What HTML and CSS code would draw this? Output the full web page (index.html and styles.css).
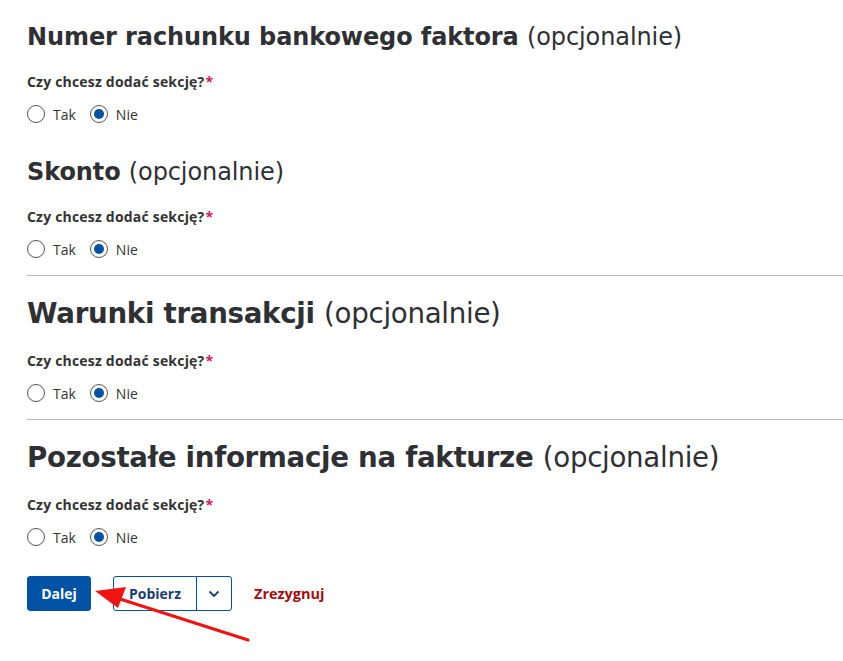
FILE: index.html
```html
<!DOCTYPE html>
<html lang="pl">
<head>
<meta charset="utf-8">
<title>Formularz</title>
<link rel="stylesheet" href="styles.css">
</head>
<body>
<main class="page">
  <section class="section first">
    <h2 class="heading small">Numer rachunku bankowego faktora <span class="opt">(opcjonalnie)</span></h2>
    <p class="label">Czy chcesz dodać sekcję?<span class="req">*</span></p>
    <div class="radios">
      <label class="radio"><span class="dot"></span>Tak</label>
      <label class="radio"><span class="dot checked"></span>Nie</label>
    </div>
  </section>
  <section class="section second">
    <h2 class="heading small">Skonto <span class="opt">(opcjonalnie)</span></h2>
    <p class="label">Czy chcesz dodać sekcję?<span class="req">*</span></p>
    <div class="radios">
      <label class="radio"><span class="dot"></span>Tak</label>
      <label class="radio"><span class="dot checked"></span>Nie</label>
    </div>
  </section>
  <hr class="sep">
  <section class="section">
    <h2 class="heading">Warunki transakcji <span class="opt">(opcjonalnie)</span></h2>
    <p class="label">Czy chcesz dodać sekcję?<span class="req">*</span></p>
    <div class="radios">
      <label class="radio"><span class="dot"></span>Tak</label>
      <label class="radio"><span class="dot checked"></span>Nie</label>
    </div>
  </section>
  <hr class="sep">
  <section class="section">
    <h2 class="heading">Pozostałe informacje na fakturze <span class="opt">(opcjonalnie)</span></h2>
    <p class="label">Czy chcesz dodać sekcję?<span class="req">*</span></p>
    <div class="radios">
      <label class="radio"><span class="dot"></span>Tak</label>
      <label class="radio"><span class="dot checked"></span>Nie</label>
    </div>
  </section>
  <div class="actions">
    <button class="btn primary">Dalej</button>
    <div class="split">
      <button class="btn outline">Pobierz</button>
      <button class="btn outline caret" aria-label="Więcej">
        <svg width="12" height="8" viewBox="0 0 12 8"><path d="M1.5 1.5 L6 6 L10.5 1.5" fill="none" stroke="#1a3c6e" stroke-width="1.8"/></svg>
      </button>
    </div>
    <a class="cancel" href="#">Zrezygnuj</a>
  </div>
</main>
<svg class="arrow" width="843" height="661" viewBox="0 0 843 661">
  <line x1="248" y1="640" x2="120" y2="599" stroke="#f01414" stroke-width="3.2" stroke-linecap="round"/>
  <polygon points="95,591 126,587 118,608" fill="#f01414"/>
</svg>
</body>
</html>
```
FILE: styles.css
```css
* { box-sizing: border-box; }
html, body { margin: 0; padding: 0; background: #fff; }
body {
  font-family: "Open Sans", "Liberation Sans", sans-serif;
  color: #333;
}
.page {
  padding: 18px 0 40px 27px;
}
.heading {
  font-family: "DejaVu Sans", "Liberation Sans", sans-serif;
  font-weight: 700;
  font-size: 27.7px;
  line-height: 34px;
  color: #2e3033;
  margin: 21px 0 0;
  letter-spacing: -0.3px;
}
.heading.small {
  font-size: 24px;
  line-height: 30px;
  letter-spacing: -0.1px;
}
.first .heading { margin-top: 4px; }
.second .heading { margin-top: 32px; }
.opt { font-weight: 400; }
.label {
  margin: 21px 0 0;
  font-size: 14px;
  font-weight: 700;
  line-height: 18px;
  letter-spacing: 0.2px;
  color: #333;
}
.req { color: #d4145a; margin-left: 1px; }
.radios {
  display: flex;
  gap: 14px;
  margin-top: 12px;
  height: 22px;
  align-items: center;
}
.radio {
  display: flex;
  align-items: center;
  gap: 8px;
  font-size: 14px;
  color: #333;
}
.dot {
  width: 18px;
  height: 18px;
  border: 1px solid #555;
  border-radius: 50%;
  display: inline-flex;
  align-items: center;
  justify-content: center;
}
.dot.checked::after {
  content: "";
  width: 10px;
  height: 10px;
  border-radius: 50%;
  background: #0052a5;
}
.sep {
  border: 0;
  border-top: 1px solid #b9b9b9;
  margin: 15px 0 0;
}
.actions {
  display: flex;
  align-items: center;
  gap: 22px;
  margin-top: 28px;
}
.btn {
  font-family: "Open Sans", "Liberation Sans", sans-serif;
  font-size: 14px;
  font-weight: 700;
  height: 35px;
  border-radius: 3px;
  cursor: pointer;
}
.primary {
  background: #0052a5;
  color: #fff;
  border: 1px solid #0052a5;
  width: 64px;
}
.split { display: flex; }
.outline {
  background: #fff;
  color: #1a3c6e;
  border: 1px solid #0052a5;
}
.split .outline:first-child {
  width: 84px;
  border-radius: 3px 0 0 3px;
}
.caret {
  width: 36px;
  border-left: 1px solid #0052a5;
  margin-left: -1px;
  border-radius: 0 3px 3px 0;
  display: flex;
  align-items: center;
  justify-content: center;
  padding: 0;
}
.cancel {
  color: #a50d0d;
  font-size: 14.5px;
  font-weight: 700;
  text-decoration: none;
}
.arrow {
  position: absolute;
  left: 0;
  top: 0;
  pointer-events: none;
}
```
